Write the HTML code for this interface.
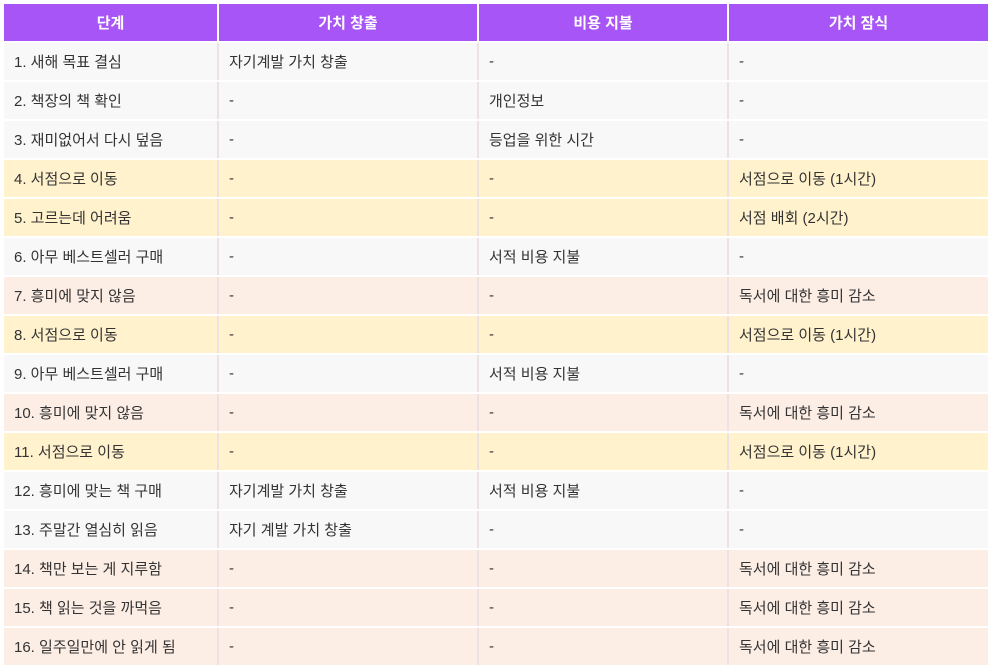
<!DOCTYPE html>
<html><head><meta charset="utf-8"><style>
html,body{margin:0;padding:0;background:#fff;width:994px;height:672px;overflow:hidden}
table{position:absolute;left:4px;top:4px;border-collapse:collapse;table-layout:fixed;width:984px;font-family:"Liberation Sans","Noto Sans CJK KR",sans-serif;font-size:15px;color:#333}
th{background:#a855f7;color:#fff;font-weight:bold;height:37px;padding:0;border-right:2px solid #fff;border-bottom:2px solid #fff;font-size:15px}
th:last-child{border-right:none}
td{height:37px;padding:0 0 0 10px;border-bottom:2px solid #fff;border-right:2px solid #ece2e2;white-space:nowrap}
td:last-child{border-right:none}
tr.g td{background:#f8f8f8}
tr.y td{background:#fff2cc}
tr.p td{background:#fdeee5}
</style></head><body>
<table>
<colgroup><col style="width:214px"><col style="width:260px"><col style="width:250px"><col style="width:260px"></colgroup>
<tr><th>단계</th><th>가치 창출</th><th>비용 지불</th><th>가치 잠식</th></tr>
<tr class="g"><td>1. 새해 목표 결심</td><td>자기계발 가치 창출</td><td>-</td><td>-</td></tr>
<tr class="g"><td>2. 책장의 책 확인</td><td>-</td><td>개인정보</td><td>-</td></tr>
<tr class="g"><td>3. 재미없어서 다시 덮음</td><td>-</td><td>등업을 위한 시간</td><td>-</td></tr>
<tr class="y"><td>4. 서점으로 이동</td><td>-</td><td>-</td><td>서점으로 이동 (1시간)</td></tr>
<tr class="y"><td>5. 고르는데 어려움</td><td>-</td><td>-</td><td>서점 배회 (2시간)</td></tr>
<tr class="g"><td>6. 아무 베스트셀러 구매</td><td>-</td><td>서적 비용 지불</td><td>-</td></tr>
<tr class="p"><td>7. 흥미에 맞지 않음</td><td>-</td><td>-</td><td>독서에 대한 흥미 감소</td></tr>
<tr class="y"><td>8. 서점으로 이동</td><td>-</td><td>-</td><td>서점으로 이동 (1시간)</td></tr>
<tr class="g"><td>9. 아무 베스트셀러 구매</td><td>-</td><td>서적 비용 지불</td><td>-</td></tr>
<tr class="p"><td>10. 흥미에 맞지 않음</td><td>-</td><td>-</td><td>독서에 대한 흥미 감소</td></tr>
<tr class="y"><td>11. 서점으로 이동</td><td>-</td><td>-</td><td>서점으로 이동 (1시간)</td></tr>
<tr class="g"><td>12. 흥미에 맞는 책 구매</td><td>자기계발 가치 창출</td><td>서적 비용 지불</td><td>-</td></tr>
<tr class="g"><td>13. 주말간 열심히 읽음</td><td>자기 계발 가치 창출</td><td>-</td><td>-</td></tr>
<tr class="p"><td>14. 책만 보는 게 지루함</td><td>-</td><td>-</td><td>독서에 대한 흥미 감소</td></tr>
<tr class="p"><td>15. 책 읽는 것을 까먹음</td><td>-</td><td>-</td><td>독서에 대한 흥미 감소</td></tr>
<tr class="p"><td>16. 일주일만에 안 읽게 됨</td><td>-</td><td>-</td><td>독서에 대한 흥미 감소</td></tr>
</table>
</body></html>
